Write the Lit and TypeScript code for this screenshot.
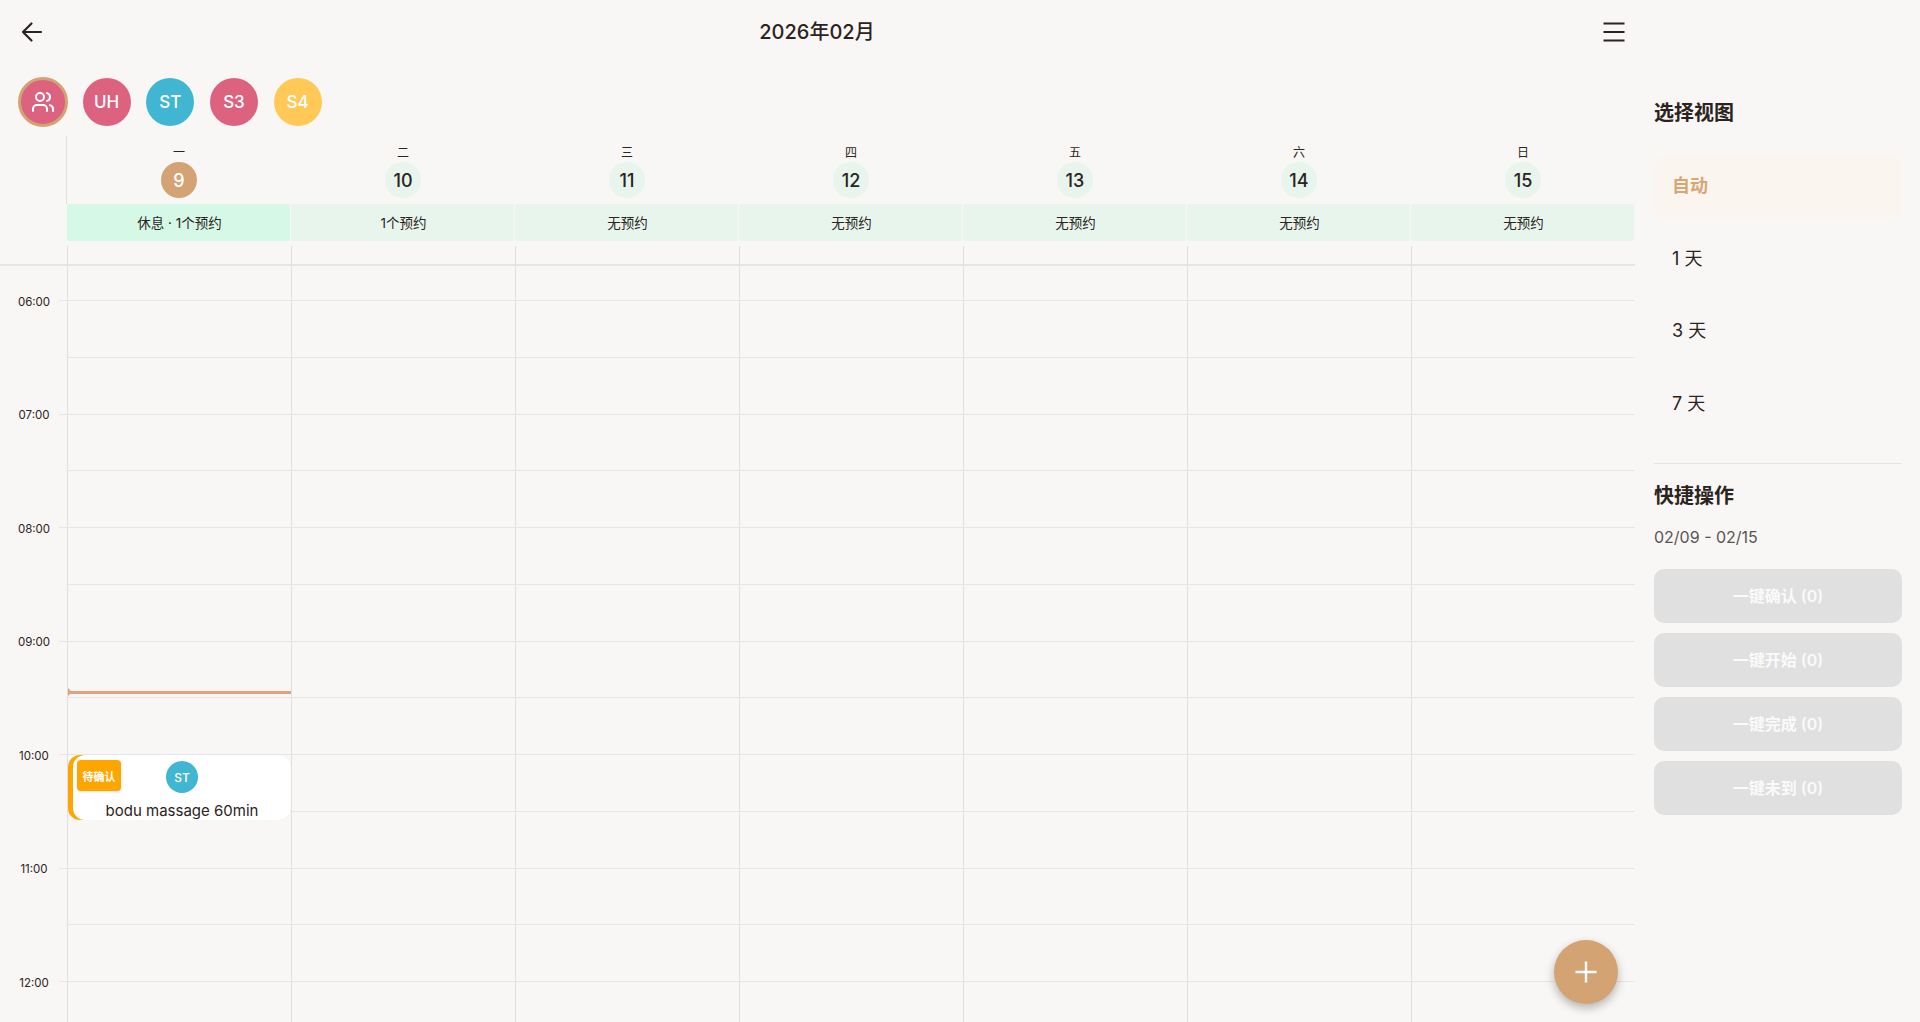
import { LitElement, html, css, svg } from "lit";
import { customElement } from "lit/decorators.js";

const DAYS = [
  { name: "一", num: 9, status: "休息 · 1个预约", today: true },
  { name: "二", num: 10, status: "1个预约" },
  { name: "三", num: 11, status: "无预约" },
  { name: "四", num: 12, status: "无预约" },
  { name: "五", num: 13, status: "无预约" },
  { name: "六", num: 14, status: "无预约" },
  { name: "日", num: 15, status: "无预约" },
];
const STAFF = [
  { t: "UH", c: "pink" },
  { t: "ST", c: "blue" },
  { t: "S3", c: "pink" },
  { t: "S4", c: "yellow" },
];
const HOURS = ["06:00", "07:00", "08:00", "09:00", "10:00", "11:00", "12:00"];

@customElement("app-root")
export class AppRoot extends LitElement {
  static styles = css`
    :host {
      display: flex;
      width: 1920px;
      height: 1022px;
      overflow: hidden;
      background: #f9f7f5;
      color: #2b2320;
      font-family: Inter, "Noto Sans CJK SC", sans-serif;
    }
    .main { width: 1635px; display: flex; flex-direction: column; position: relative; }
    .top {
      height: 64px; flex: none; display: flex; align-items: center; justify-content: space-between;
      padding: 0 9px 4px 20px; box-sizing: border-box;
    }
    .top h1 { margin: 0 12px 0 0; font-size: 20px; font-weight: 500; }
    .top .icon { margin-top: 3px; }
    .icon { display: block; fill: none; stroke: currentColor; stroke-linecap: round; stroke-linejoin: round; }
    .staff { height: 72px; flex: none; padding: 15px 0 0 18px; margin-top: -2px; margin-bottom: 2px; box-sizing: border-box; display: flex; align-items: flex-start; gap: 15.67px; }
    .av {
      width: 48px; height: 48px; margin-top: 1px; border-radius: 50%; display: flex; align-items: center; justify-content: center;
      color: #fff; font-size: 17px; font-weight: 500;
    }
    .av.all { width: 50px; height: 50px; margin-top: 0; margin-right: -1px; box-sizing: border-box; border: 3px solid #d4a373; background: #dc6280; }
    .pink { background: #dc6280; }
    .blue { background: #40b6d2; }
    .yellow { background: #ffc857; }
    .week { display: grid; grid-template-columns: 67px repeat(7, 224px); height: 105px; flex: none; }
    .gutter { border-right: 1px solid #e2e0de; height: 68px; }
    .day { display: flex; flex-direction: column; align-items: center; min-width: 0; }
    .day-name { font-size: 12px; line-height: 16px; margin-top: 9px; }
    .day-num {
      width: 36px; height: 36px; margin-top: 1px; border-radius: 50%; background: #e8f5ec;
      display: flex; align-items: center; justify-content: center; font-size: 18px; font-weight: 500;
    }
    .day.today .day-num { background: #d4a373; color: #fff; }
    .status {
      align-self: stretch; height: 37px; margin: 6px 1px 0 0; padding: 0 0 2px 2px; box-sizing: border-box; border-radius: 2px; background: #e8f5ec;
      display: flex; align-items: center; justify-content: center; font-size: 13.5px;
    }
    .day.today .status { background: #d5f9e6; }
    .spacer { height: 5px; flex: none; }
    .grid { position: relative; flex: 1; min-height: 0; overflow: hidden; }
    .head-line { height: 19.5px; border-bottom: 2px solid #e8e6e4; box-sizing: border-box; }
    .rows { position: relative; }
    .row { height: 56.75px; box-sizing: border-box; border-bottom: 1px solid #e8e6e4; margin-left: 67px; }
    .row.hour { margin-left: 59px; }
    .row.first { height: 35.5px; }
    .hlabel { position: absolute; left: 16px; width: 36px; text-align: center; font-size: 11.5px; line-height: 16px; color: #2b2320; }
    .cols { position: absolute; inset: 0; display: grid; grid-template-columns: 67px repeat(7, 224px); }
    .col { position: relative; border-left: 1px solid #e2e0de; }
    .now { position: absolute; left: 0; right: 0; top: 445px; height: 3px; background: #dfa27e; }
    .now::before {
      content: ""; position: absolute; left: 0; top: -3px; width: 0; height: 0;
      border-left: 4px solid #dfa27e; border-top: 4.5px solid transparent; border-bottom: 4.5px solid transparent;
    }
    .event {
      position: absolute; left: 0; right: 0; top: 509px; height: 65px; border-radius: 12px; overflow: hidden;
      background: linear-gradient(90deg, #ffa500 50%, #f3e3cc 50%);
    }
    .card { position: absolute; inset: 0 0 0 5px; border-radius: 12px; background: #fff; overflow: hidden; }
    .badge {
      position: absolute; left: 4px; top: 5px; width: 44px; height: 31px; border-radius: 4px; background: #ffa500;
      color: #fff; font-size: 11px; font-weight: 600; display: flex; align-items: center; justify-content: center;
      box-shadow: 0 1px 2px rgba(0,0,0,.12);
    }
    .ev-av {
      position: absolute; left: 93px; top: 6px; width: 32px; height: 32px; border-radius: 50%; background: #40b6d2;
      color: #fff; font-size: 12px; font-weight: 500; display: flex; align-items: center; justify-content: center;
    }
    .ev-title { position: absolute; left: 0; right: 0; top: 46px; text-align: center; font-size: 15px; line-height: 20px; white-space: nowrap; }
    .fab {
      position: absolute; left: 1554px; top: 940px; width: 64px; height: 64px; border-radius: 50%; background: #d4a373; color: #fff;
      display: flex; align-items: center; justify-content: center; box-shadow: 0 4px 10px rgba(0,0,0,.28);
    }
    .side { width: 285px; flex: none; box-sizing: border-box; padding: 101px 18px 0 19px; display: flex; flex-direction: column; }
    .side h2 { margin: 0; font-size: 20px; line-height: 24px; font-weight: 700; }
    .views { margin-top: 30px; display: flex; flex-direction: column; gap: 10px; }
    .view { height: 62.7px; border-radius: 10px; display: flex; align-items: center; padding: 0 0 5px 18px; box-sizing: border-box; font-size: 18px; }
    .view.on { background: #fbf5ef; color: #d9a673; font-weight: 600; }
    .sep { height: 1px; background: #e6e4e2; margin: 27.7px 0 20px; }
    .range { margin: 18px 0 21px; font-size: 16px; line-height: 22px; color: #5a5552; }
    .actions { display: flex; flex-direction: column; gap: 9.7px; }
    .btn {
      height: 54px; border-radius: 10px; background: #e0e0e0; color: #fafafa; font-size: 16px; font-weight: 600; padding-bottom: 2px; box-sizing: border-box;
      display: flex; align-items: center; justify-content: center;
    }
  `;

  private rows() {
    const out = [html`<div class="head-line"></div>`, html`<div class="row hour first"></div>`];
    for (let i = 0; i < 15; i++) out.push(html`<div class="row ${i % 2 === 1 ? "hour" : ""}"></div>`);
    return out;
  }

  render() {
    return html`
      <div class="main">
        <div class="top">
          <svg class="icon" width="24" height="24" viewBox="0 0 24 24" stroke-width="2.2">
            ${svg`<path d="M21 12H3M11.5 3.5 3 12l8.5 8.5" />`}
          </svg>
          <h1>2026年02月</h1>
          <svg class="icon" width="24" height="24" viewBox="0 0 24 24" stroke-width="2">
            ${svg`<path d="M1.5 3.5h21M1.5 12h21M1.5 20.5h21" stroke-linecap="butt" />`}
          </svg>
        </div>
        <div class="staff">
          <div class="av all">
            <svg class="icon" width="24" height="24" viewBox="0 0 24 24" stroke-width="2">
              ${svg`<path d="M16 21v-2a4 4 0 0 0-4-4H6a4 4 0 0 0-4 4v2" /><circle cx="9" cy="7" r="4" /><path d="M22 21v-2a4 4 0 0 0-3-3.87" /><path d="M16 3.13a4 4 0 0 1 0 7.75" />`}
            </svg>
          </div>
          ${STAFF.map((s) => html`<div class="av ${s.c}">${s.t}</div>`)}
        </div>
        <div class="week">
          <div class="gutter"></div>
          ${DAYS.map(
            (d) => html`<div class="day ${d.today ? "today" : ""}">
              <div class="day-name">${d.name}</div>
              <div class="day-num">${d.num}</div>
              <div class="status">${d.status}</div>
            </div>`
          )}
        </div>
        <div class="spacer"></div>
        <div class="grid">
          <div class="rows">
            ${this.rows()}
            ${HOURS.map((h, i) => html`<div class="hlabel" style="top:${47.5 + i * 113.5}px">${h}</div>`)}
          </div>
          <div class="cols">
            <div></div>
            ${DAYS.map(
              (d) => html`<div class="col">
                ${d.today
                  ? html`<div class="now"></div>
                      <div class="event">
                        <div class="card">
                          <div class="badge">待确认</div>
                          <div class="ev-av">ST</div>
                          <div class="ev-title">bodu massage 60min</div>
                        </div>
                      </div>`
                  : ""}
              </div>`
            )}
          </div>
        </div>
        <div class="fab">
          <svg class="icon" width="24" height="24" viewBox="0 0 24 24" stroke-width="2.4">
            ${svg`<path d="M12 1.5v21M1.5 12h21" stroke-linecap="butt" />`}
          </svg>
        </div>
      </div>
      <div class="side">
        <h2>选择视图</h2>
        <div class="views">
          <div class="view on">自动</div>
          <div class="view">1 天</div>
          <div class="view">3 天</div>
          <div class="view">7 天</div>
        </div>
        <div class="sep"></div>
        <h2>快捷操作</h2>
        <div class="range">02/09 - 02/15</div>
        <div class="actions">
          <div class="btn">一键确认 (0)</div>
          <div class="btn">一键开始 (0)</div>
          <div class="btn">一键完成 (0)</div>
          <div class="btn">一键未到 (0)</div>
        </div>
      </div>
    `;
  }
}
